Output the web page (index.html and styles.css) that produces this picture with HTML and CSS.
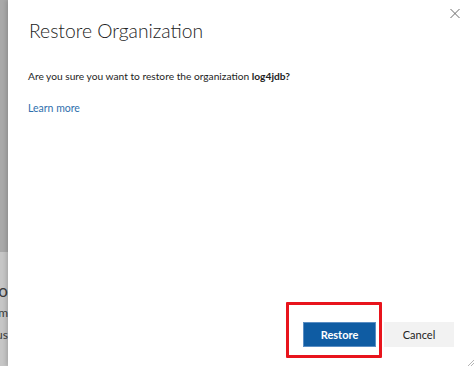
FILE: index.html
```html
<!DOCTYPE html>
<html lang="en">
<head>
    <meta charset="UTF-8">
    <title>Restore Organization</title>
    <link rel="stylesheet" href="styles.css">
</head>
<body>

<div class="page-edge">
    <div class="edge-top"></div>
    <div class="edge-bottom">
        <span class="edge-title">Organizatio</span>
        <span class="edge-line">Platform</span>
        <span class="edge-line">Status</span>
    </div>
</div>

<div class="dialog">
    <div class="dialog-header">
        <h1 class="dialog-title">Restore Organization</h1>
        <button class="close-button" aria-label="Close">
            <svg width="10" height="9" viewBox="0 0 10 9">
                <path d="M0.5 0 L9.5 9 M9.5 0 L0.5 9" stroke="#6b6b6b" stroke-width="1" fill="none"/>
            </svg>
        </button>
    </div>

    <div class="dialog-body">
        <p class="question">Are you sure you want to restore the organization <strong>log4jdb?</strong></p>
        <a class="learn-more" href="#">Learn more</a>
    </div>

    <div class="dialog-footer">
        <button class="primary-button">Restore</button>
        <button class="secondary-button">Cancel</button>
    </div>

    <!-- marca vermelha da captura -->
    <div class="highlight"></div>

    <svg class="resize-grip" width="8" height="8" viewBox="0 0 8 8">
        <path d="M8 2 L2 8 M8 5 L5 8" stroke="#b5b5b5" stroke-width="1" fill="none"/>
    </svg>
</div>

</body>
</html>
```

FILE: styles.css
```css
body {
    font-family: 'Lato', sans-serif;
    margin: 0;
    padding: 0;
    width: 474px;
    height: 366px;
    overflow: hidden;
    display: flex;
    background-color: #fff;
}

.page-edge {
    width: 8px;
    display: flex;
    flex-direction: column;
    overflow: hidden;
}

.edge-top {
    height: 252px;
    background-color: #a9a9a9;
}

.edge-bottom {
    flex: 1;
    background-color: #c6c6c6;
    display: flex;
    flex-direction: column;
    align-items: flex-end;
    padding-top: 28px;
    color: #3a3a3a;
}

.edge-title {
    font-size: 17px;
    line-height: 22px;
    white-space: nowrap;
}

.edge-line {
    font-size: 12px;
    line-height: 22px;
    white-space: nowrap;
}

.dialog {
    flex: 1;
    position: relative;
    display: flex;
    flex-direction: column;
    background-color: #fff;
    box-shadow: -2px 0 4px rgba(0, 0, 0, 0.15);
}

.dialog-header {
    display: flex;
    justify-content: space-between;
    align-items: flex-start;
    padding: 17px 14px 0 21px;
}

.dialog-title {
    margin: 0;
    font-size: 19.3px;
    font-weight: 300;
    color: #222;
    line-height: 28px;
}

.close-button {
    background-color: transparent;
    border: none;
    padding: 0;
    margin-top: -8px;
    cursor: pointer;
    line-height: 0;
}

.dialog-body {
    padding: 0 20px;
}

.question {
    margin: 22px 0 0 0;
    font-size: 10.2px;
    line-height: 18px;
    color: #1e1e1e;
}

.question strong {
    font-weight: 700;
}

.learn-more {
    display: inline-block;
    margin-top: 14px;
    font-size: 10.5px;
    line-height: 18px;
    color: #2f6fad;
    text-decoration: none;
}

.dialog-footer {
    margin-top: auto;
    display: flex;
    justify-content: flex-end;
    gap: 8px;
    padding: 0 20px 19px 0;
}

.primary-button {
    width: 73px;
    height: 25px;
    background-color: #0f5ca3;
    border: 1px solid #5a8ec4;
    color: #fff;
    font-family: 'Lato', sans-serif;
    font-weight: 700;
    font-size: 11px;
    cursor: pointer;
}

.secondary-button {
    width: 70px;
    height: 25px;
    background-color: #f2f2f2;
    border: none;
    color: #222;
    font-family: 'Lato', sans-serif;
    font-size: 11px;
    cursor: pointer;
}

.highlight {
    position: absolute;
    left: 278px;
    top: 302px;
    width: 90px;
    height: 50px;
    border: 3px solid #e8141c;
    border-radius: 1px;
}

.resize-grip {
    position: absolute;
    right: 0;
    bottom: 0;
}
```
